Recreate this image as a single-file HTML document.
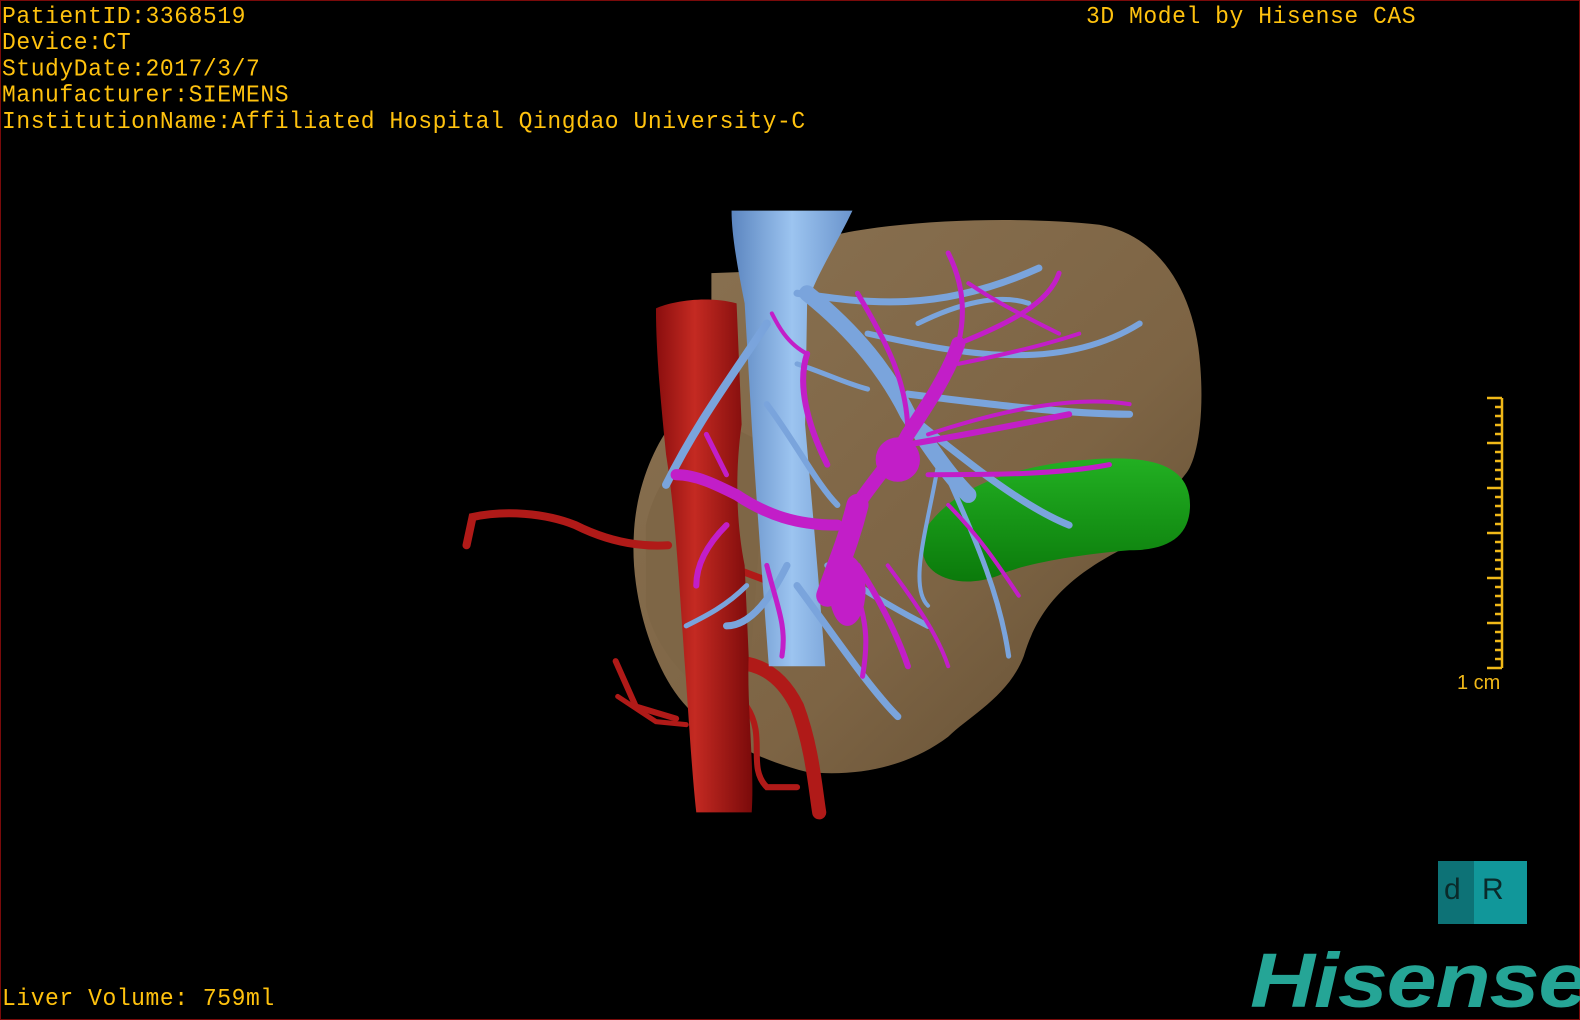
<!DOCTYPE html>
<html><head><meta charset="utf-8"><style>
html,body{margin:0;padding:0;background:#000;width:1580px;height:1020px;overflow:hidden}
.wrap{position:relative;width:1580px;height:1020px;box-sizing:border-box;border:1px solid #7a0a0a;background:#000}
.t{position:absolute;color:#ffc20e;font-family:"Liberation Mono",monospace;font-size:23px;line-height:25px;white-space:pre;letter-spacing:0.55px;transform:scaleY(1.05);transform-origin:left top}
svg{position:absolute;left:0;top:0}
.logo{position:absolute;left:1437px;top:860px;width:89px;height:63px;background:#11979a}
.logo .l{position:absolute;left:0;top:0;width:36px;height:63px;background:#0d7276}
.logo span{position:absolute;font-family:"Liberation Sans",sans-serif;font-size:30px;color:#0a2a2a}
.hs{position:absolute;left:1249px;top:936px;font-family:"Liberation Sans",sans-serif;font-weight:bold;font-style:italic;font-size:77px;color:#25a596;letter-spacing:-1px;transform:scaleX(1.17);transform-origin:left top}
</style></head><body><div class="wrap">
<svg width="1580" height="1020" viewBox="0 0 1568 1012" preserveAspectRatio="none">
<defs>
<linearGradient id="lv" x1="0" y1="0" x2="1" y2="1"><stop offset="0" stop-color="#8a7252"/><stop offset="0.6" stop-color="#7d6444"/><stop offset="1" stop-color="#5e4a30"/></linearGradient>
<linearGradient id="gb" x1="0" y1="0" x2="0" y2="1"><stop offset="0" stop-color="#22b022"/><stop offset="1" stop-color="#0b7a0b"/></linearGradient>
<linearGradient id="ao" x1="0" y1="0" x2="1" y2="0"><stop offset="0" stop-color="#8a0e0e"/><stop offset="0.4" stop-color="#c42a22"/><stop offset="1" stop-color="#7a0a0a"/></linearGradient>
<linearGradient id="ivc" x1="0" y1="0" x2="1" y2="0"><stop offset="0" stop-color="#5c86c0"/><stop offset="0.5" stop-color="#9cc4f0"/><stop offset="1" stop-color="#6a94cc"/></linearGradient>
</defs>
<path d="M705,270 L760,268 L800,240 C860,218 1000,212 1090,222 C1150,232 1185,290 1190,360 C1195,420 1185,460 1175,470 L1120,540 C1060,570 1030,600 1015,650 C1000,690 960,710 940,730 C900,760 850,770 800,765 C740,750 690,720 665,680 C640,640 625,580 628,530 C630,480 650,440 665,420 L705,300 Z" fill="url(#lv)"/>
<path d="M640,520 C650,470 690,430 720,420 L760,440 L740,700 C700,700 650,650 640,600 Z" fill="#7e6646"/>
<path d="M920,520 C950,480 1010,460 1080,455 C1140,450 1180,460 1180,500 C1180,530 1160,545 1120,545 C1060,550 1010,560 990,570 C950,585 915,570 915,545 Z" fill="url(#gb)"/>
<g stroke="#b01a18" fill="none" stroke-linecap="round">
<path d="M462,540 L468,512 C500,505 540,508 570,520 C600,535 630,542 662,540" stroke-width="8"/>
<path d="M700,660 C740,650 770,660 790,700 C805,740 808,780 812,805" stroke-width="14"/>
<path d="M610,655 L630,700 L670,712" stroke-width="6"/>
<path d="M612,690 L650,715 L680,718" stroke-width="5"/>
<path d="M740,700 C760,730 740,760 760,780 L790,780" stroke-width="6"/>
<path d="M720,560 L760,575" stroke-width="7"/>
</g>
<path d="M650,305 C665,298 700,292 730,300 L735,420 C728,470 730,520 738,560 L742,650 C740,700 748,760 745,805 L690,805 C685,760 682,700 678,650 C672,560 668,500 660,450 C655,400 650,350 650,305 Z" fill="url(#ao)"/>
<path d="M725,208 L845,208 C830,240 810,270 800,300 L798,420 C805,500 812,580 818,660 L762,660 C756,580 750,500 745,420 L738,300 C730,260 725,230 725,208 Z" fill="url(#ivc)"/>
<g stroke="#7aa4dc" fill="none" stroke-linecap="round">
<path d="M800,290 C850,330 880,370 900,410 C920,440 940,470 960,490" stroke-width="16"/>
<path d="M790,290 C860,300 930,310 1030,265" stroke-width="7"/>
<path d="M860,330 C950,350 1050,370 1130,320" stroke-width="6"/>
<path d="M900,390 C980,400 1060,410 1120,410" stroke-width="7"/>
<path d="M900,410 C950,450 1010,500 1060,520" stroke-width="7"/>
<path d="M930,450 C960,520 990,580 1000,650" stroke-width="5"/>
<path d="M930,460 C920,520 900,580 920,600" stroke-width="4"/>
<path d="M760,320 C720,380 690,420 660,480" stroke-width="8"/>
<path d="M760,400 C790,440 810,480 830,500" stroke-width="6"/>
<path d="M790,360 C820,370 840,380 860,385" stroke-width="5"/>
<path d="M780,560 C760,600 740,620 720,620" stroke-width="7"/>
<path d="M790,580 C820,620 860,680 890,710" stroke-width="7"/>
<path d="M820,560 C850,580 880,600 920,620" stroke-width="6"/>
<path d="M740,580 C720,600 700,610 680,620" stroke-width="5"/>
<path d="M910,320 C950,300 990,290 1020,300" stroke-width="5"/>
</g>
<g stroke="#c21ec8" fill="none" stroke-linecap="round">
<path d="M850,500 C870,470 890,450 900,430 C920,400 940,370 950,340" stroke-width="14"/>
<path d="M850,500 C840,540 830,560 820,590" stroke-width="22"/>
<path d="M830,520 C790,520 760,510 730,490 C710,480 690,470 670,470" stroke-width="11"/>
<path d="M900,440 C960,430 1010,420 1060,410" stroke-width="6"/>
<path d="M900,430 C900,380 880,340 850,290" stroke-width="5"/>
<path d="M950,340 C960,300 950,270 940,250" stroke-width="5"/>
<path d="M950,340 C1000,320 1040,300 1050,270" stroke-width="5"/>
<path d="M950,360 C1000,350 1040,340 1070,330" stroke-width="4"/>
<path d="M920,470 C980,470 1050,470 1100,460" stroke-width="5"/>
<path d="M920,430 C980,410 1060,390 1120,400" stroke-width="4"/>
<path d="M960,280 C990,300 1010,310 1050,330" stroke-width="4"/>
<path d="M820,460 C800,420 790,380 800,350" stroke-width="6"/>
<path d="M800,350 C780,340 770,320 765,310" stroke-width="4"/>
<path d="M720,520 C700,540 690,560 690,580" stroke-width="6"/>
<path d="M720,470 C710,450 705,440 700,430" stroke-width="5"/>
<path d="M850,560 C870,590 890,630 900,660" stroke-width="6"/>
<path d="M850,590 C860,620 860,640 855,670" stroke-width="5"/>
<path d="M880,560 C910,600 930,630 940,660" stroke-width="4"/>
<path d="M760,560 C770,600 780,620 775,650" stroke-width="5"/>
<path d="M940,500 C970,530 990,560 1010,590" stroke-width="4"/>
</g>
<ellipse cx="840" cy="585" rx="18" ry="35" fill="#c21ec8"/>
<ellipse cx="890" cy="455" rx="22" ry="22" fill="#c21ec8"/>
</svg>
<div class="t" style="left:1px;top:3px">PatientID:3368519
Device:CT
StudyDate:2017/3/7
Manufacturer:SIEMENS
InstitutionName:Affiliated Hospital Qingdao University-C</div>
<div class="t" style="left:1085px;top:3px">3D Model by Hisense CAS</div>
<div class="t" style="left:1px;top:985px">Liver Volume: 759ml</div>
<svg width="1580" height="1020" viewBox="0 0 1580 1020">
<g stroke="#f0b818" stroke-width="2.5">
<line x1="1501" y1="397" x2="1501" y2="667"/>
<line x1="1486" y1="397" x2="1501" y2="397"/><line x1="1486" y1="442" x2="1501" y2="442"/><line x1="1486" y1="487" x2="1501" y2="487"/><line x1="1486" y1="532" x2="1501" y2="532"/><line x1="1486" y1="577" x2="1501" y2="577"/><line x1="1486" y1="622" x2="1501" y2="622"/><line x1="1486" y1="667" x2="1501" y2="667"/>
<path d="M1494,406H1501M1494,415H1501M1494,424H1501M1494,433H1501M1494,451H1501M1494,460H1501M1494,469H1501M1494,478H1501M1494,496H1501M1494,505H1501M1494,514H1501M1494,523H1501M1494,541H1501M1494,550H1501M1494,559H1501M1494,568H1501M1494,586H1501M1494,595H1501M1494,604H1501M1494,613H1501M1494,631H1501M1494,640H1501M1494,649H1501M1494,658H1501"/>
</g>
<text x="1456" y="688" fill="#f0b818" font-family="Liberation Sans,sans-serif" font-size="20">1 cm</text>
</svg>
<div class="logo"><div class="l"></div><span style="left:6px;top:12px">d</span><span style="left:44px;top:12px">R</span></div>
<div class="hs">Hisense</div>
</div></body></html>
